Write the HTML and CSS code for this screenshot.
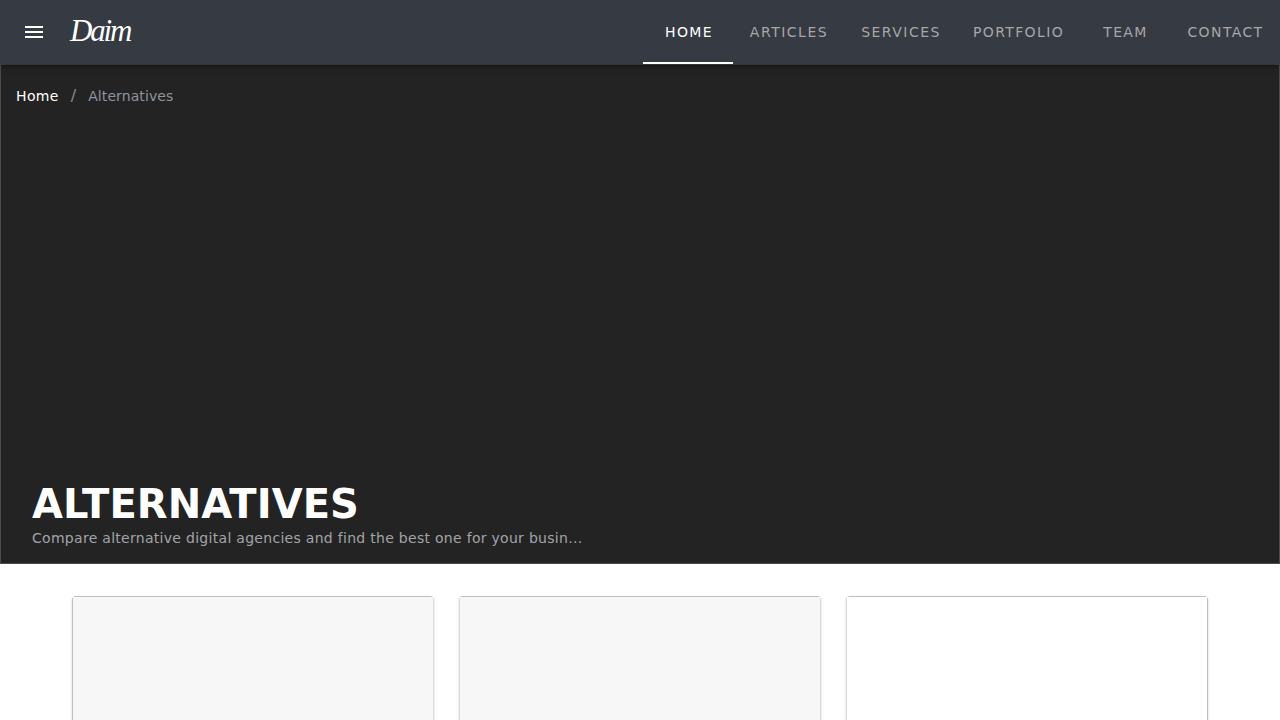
FILE: index.html
```html
<!DOCTYPE html>
<html lang="en">
<head>
<meta charset="utf-8">
<title>Alternatives</title>
<link rel="stylesheet" href="styles.css">
</head>
<body>
<header class="header">
  <svg class="menu" viewBox="0 0 24 24"><path d="M3 18h18v-2H3v2zm0-5h18v-2H3v2zm0-7v2h18V6H3z"/></svg>
  <span class="brand">Daim</span>
  <nav class="tabs">
    <a class="tab active">HOME</a>
    <a class="tab wide">ARTICLES</a>
    <a class="tab services">SERVICES</a>
    <a class="tab">PORTFOLIO</a>
    <a class="tab">TEAM</a>
    <a class="tab">CONTACT</a>
  </nav>
</header>
<section class="hero">
  <div class="crumbs"><span class="crumb-home">Home</span><span class="slash">/</span><span class="crumb-current">Alternatives</span></div>
  <div class="intro">
    <h1 class="title">ALTERNATIVES</h1>
    <p class="subtitle">Compare alternative digital agencies and find the best one for your busin...</p>
  </div>
</section>
<main class="cards">
  <article class="card"><div class="media filled"></div></article>
  <article class="card"><div class="media filled"></div></article>
  <article class="card"><div class="media"></div></article>
</main>
</body>
</html>
```
FILE: styles.css
```css
* { box-sizing: border-box; }
body { margin: 0; height: 720px; display: flex; flex-direction: column; overflow: hidden; background: #fff; font-family: "DejaVu Sans", sans-serif; font-size: 14px; }
.header { display: flex; flex: none; align-items: center; height: 64px; padding-left: 22px; background: #363a42; position: relative; z-index: 1; box-shadow: 0 2px 4px -1px rgba(0,0,0,.2), 0 4px 5px rgba(0,0,0,.14), 0 1px 10px rgba(0,0,0,.12); }
.menu { width: 24px; height: 24px; fill: #fff; flex: none; }
.brand { margin-left: 24px; padding-bottom: 3px; color: #fff; font: italic 31px/36px "Liberation Serif", serif; letter-spacing: -2.2px; }
.tabs { display: grid; grid-template-columns: 90px 112px 112px 123px 91px 109px; margin-left: auto; }
.tab { display: flex; align-items: center; justify-content: center; height: 64px; letter-spacing: 1.38px; color: #a6a7a9; border-bottom: 2px solid transparent; border-top: 2px solid transparent; }
.tab.active { padding-left: 2px; color: #fff; border-bottom-color: #fff; }
.tab.wide { letter-spacing: 1.5px; }
.tab.services { letter-spacing: 1.47px; }
.hero { display: flex; flex: none; flex-direction: column; justify-content: space-between; height: 500px; border: 1px solid #4b4b4b; background: #232323; }
.crumbs { display: flex; gap: 12px; padding: 23px 15px 0; line-height: 16px; color: #8e949e; }
.crumb-home { color: #fff; letter-spacing: .35px; }
.crumb-current { letter-spacing: .1px; }
.slash { color: #8b8b8b; font-size: 16px; }
.intro { padding: 0 31px 14px; }
.title { margin: 0; color: #fff; font-size: 40px; line-height: 45px; font-weight: 700; letter-spacing: .1px; }
.subtitle { margin: 0; line-height: 22px; letter-spacing: .29px; color: #a2a3a8; }
.cards { display: grid; flex: 1; min-height: 0; grid-template-columns: repeat(3, 362px); gap: 25px; padding: 32px 72px 0; }
.card { display: grid; border-radius: 4px 4px 0 0; overflow: hidden; background: #fff; box-shadow: 0 2px 1px -1px rgba(0,0,0,.2), 0 1px 1px rgba(0,0,0,.14), 0 1px 3px rgba(0,0,0,.12); }
.media { border: 1px solid #bebebe; border-bottom: 0; }
.filled { background: #f7f7f7; }
.card:first-child .media { border-right-color: #dcdcdc; }
.card:nth-child(2) .media { border-left-color: #d8d8d8; border-right-color: #d8d8d8; }
.card:nth-child(3) .media { border-left-color: #d8d8d8; }
```
